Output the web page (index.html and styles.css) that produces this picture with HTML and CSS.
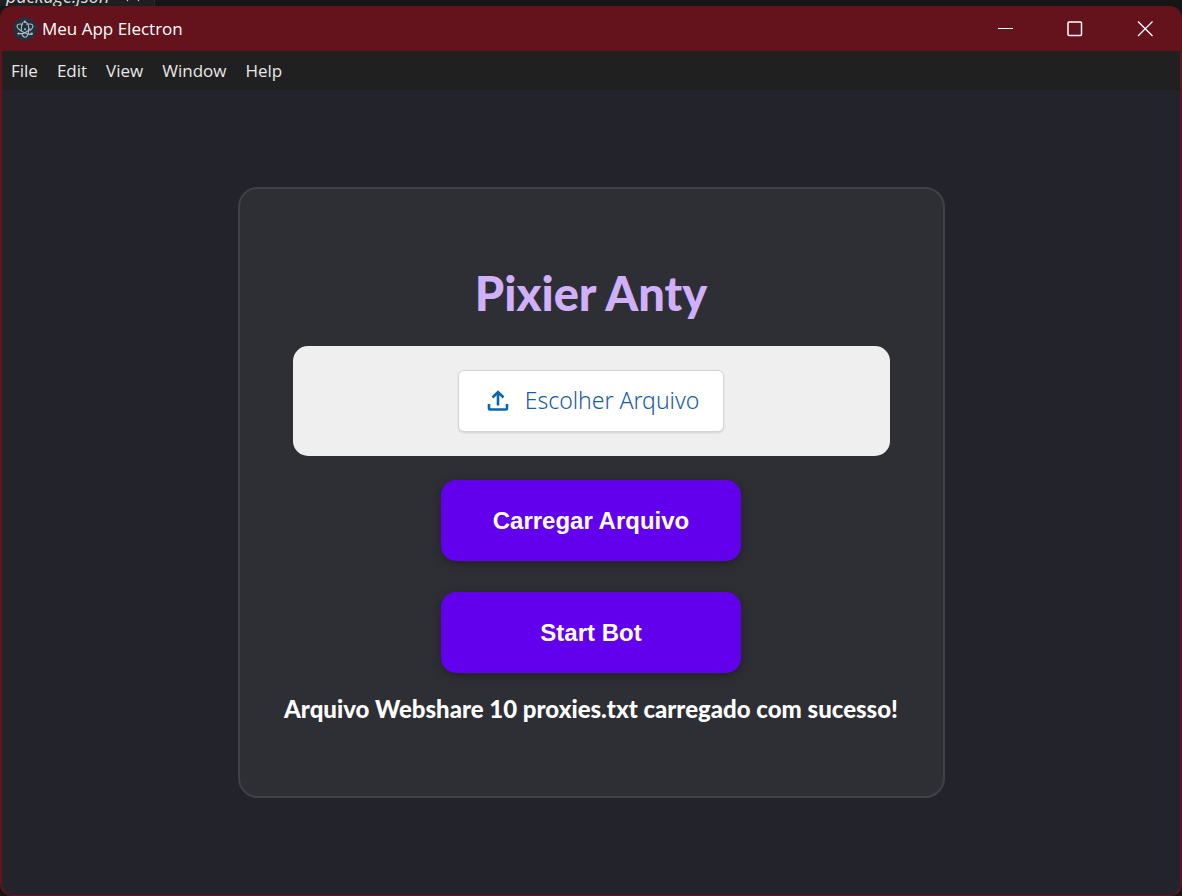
FILE: index.html
```
<!DOCTYPE html>
<html lang="pt-BR">
<head>
<meta charset="utf-8">
<title>Meu App Electron</title>
<link rel="stylesheet" href="styles.css">
</head>
<body>
<div class="backdrop">
  <div class="backdrop-tab">
    <span>package.json</span>
    <svg class="backdrop-mark" viewBox="0 0 18 6" aria-hidden="true"><path d="M1 -3L3.5 1L6 -3M12 -3L14.500 1L17 -3"/></svg>
  </div>
</div>
<div class="window">
  <header class="titlebar">
    <svg class="app-icon" viewBox="0 0 24 24" aria-hidden="true">
      <circle cx="12" cy="12" r="12" fill="#2b2e3a"/>
      <g fill="none" stroke="#9fc4cc" stroke-width="1.1" stroke-linecap="round">
        <path d="M9.500 7.200C6.500 6.700 4.600 7.200 4.100 8.300C3.400 10 6 12.800 10 15C13.300 16.900 16.600 17.700 18.500 17.200"/>
        <path d="M13.800 7.300C18 6.500 20 7.300 20 9.300C20 10.600 18.900 12 17.300 13.300"/>
        <path d="M12.800 5.200C14.600 6 15.800 9 15.800 12.500C15.800 16.800 14.100 20.200 12 20.200C10.700 20.200 9.600 19 8.900 17"/>
        <path d="M8.300 13.500C8.200 10 8.800 7 10 5.500M6.700 16.500C9.500 17 14 15 17 12"/>
      </g>
      <g fill="#9fc4cc"><circle cx="12" cy="12.300" r="1"/><circle cx="11.800" cy="4.800" r="1.200"/><circle cx="5.600" cy="16.600" r="1.200"/><circle cx="18.700" cy="16.800" r="1.200"/></g>
    </svg>
    <span class="app-title">Meu App Electron</span>
    <div class="controls">
      <button class="control" type="button" aria-label="Minimizar"><svg viewBox="0 0 16 16"><path d="M1 7.500h15"/></svg></button>
      <button class="control" type="button" aria-label="Maximizar"><svg viewBox="0 0 16 16"><rect x="1" y="1" width="13.500" height="13.500" rx="1" class="thick"/></svg></button>
      <button class="control" type="button" aria-label="Fechar"><svg viewBox="0 0 16 16"><path d="M1 0.500l14.500 14.500M15.500 0.500L1 15" class="cross"/></svg></button>
    </div>
  </header>
  <nav class="menubar">
    <button class="menu-item" type="button">File</button>
    <button class="menu-item" type="button">Edit</button>
    <button class="menu-item" type="button">View</button>
    <button class="menu-item" type="button">Window</button>
    <button class="menu-item" type="button">Help</button>
  </nav>
  <main class="content">
    <section class="card">
      <h1 class="heading">Pixier Anty</h1>
      <div class="dropzone">
        <button class="choose" type="button">
          <svg class="upload-icon" viewBox="0 0 22 22" aria-hidden="true"><path d="M2 14v4.5q0 1 1 1h16q1 0 1-1V14M11 15.5V3M5.500 7.500L11 2l5.500 5.500"/></svg>
          <span>Escolher Arquivo</span>
        </button>
      </div>
      <button class="action" type="button">Carregar Arquivo</button>
      <button class="action" type="button">Start Bot</button>
      <p class="status">Arquivo Webshare 10 proxies.txt carregado com sucesso!</p>
    </section>
  </main>
</div>
</body>
</html>
```
FILE: styles.css
```
* { box-sizing: border-box; }
body {
  margin: 0;
  min-height: 100vh;
  display: flex;
  flex-direction: column;
  background: #161616;
  font-family: "Open Sans", "Noto Sans", sans-serif;
}
button { font: inherit; cursor: pointer; }
.backdrop {
  display: flex;
  align-items: flex-end;
  height: 6px;
  overflow: hidden;
  color: #dddddd;
  font-size: 18px;
  font-style: italic;
  line-height: 18px;
}
.backdrop-tab {
  display: flex;
  align-items: flex-end;
  gap: 15px;
  padding: 0 12px 1px 6px;
  border-right: 1px solid #2a2a2a;
  background: #1f1f1f;
}
.backdrop-mark { width: 18px; height: 6px; fill: none; stroke: #dddddd; stroke-width: 1.5; }
.window {
  flex: 1;
  display: flex;
  flex-direction: column;
  overflow: hidden;
  border: 2px solid #64121b;
  border-top: 0;
  border-bottom-width: 1px;
  border-radius: 12px;
  background: #23232b;
}
.titlebar {
  display: flex;
  align-items: center;
  height: 45px;
  padding-left: 11px;
  background: #64121b;
  color: #ffffff;
}
.app-icon { width: 24px; height: 24px; }
.app-title { margin-left: 5px; font-size: 17px; }
.controls { display: flex; align-self: stretch; margin-left: auto; }
.control {
  display: flex;
  align-items: center;
  justify-content: center;
  width: 70px;
  padding: 0;
  border: 0;
  background: none;
}
.control svg { width: 16px; height: 16px; fill: none; stroke: #ffffff; stroke-width: 1; }
.control .thick { stroke-width: 1.5; }
.control .cross { stroke-width: 1.3; }
.menubar {
  display: flex;
  gap: 19px;
  height: 39px;
  padding-left: 9px;
  background: #202020;
}
.menu-item { padding: 0; border: 0; background: none; color: #e8e8e8; font-size: 17px; }
.content {
  flex: 1;
  display: flex;
  align-items: center;
  justify-content: center;
  padding: 24px;
}
.card {
  display: flex;
  flex-direction: column;
  align-items: center;
  width: 100%;
  max-width: 707px;
  padding: 72px 36px 70px;
  border: 2px solid #404146;
  border-radius: 20px;
  background: #2e2f34;
}
.heading {
  margin: 0;
  color: #d0b0fa;
  font: 900 47px/64px Lato, sans-serif;
}
.dropzone {
  display: flex;
  justify-content: center;
  align-self: stretch;
  margin: 21px 17px 24px;
  padding: 24px;
  border-radius: 15px;
  background: #efefef;
}
.choose {
  display: flex;
  align-items: center;
  gap: 16px;
  height: 62px;
  padding: 0 24px 0 28px;
  border: 1px solid #d4d4d4;
  border-radius: 6px;
  background: #ffffff;
  box-shadow: 0 1px 2px rgba(0, 0, 0, 0.12);
  color: #175ca8;
  font: 300 23px/32px "Noto Sans", sans-serif;
}
.choose span { padding-bottom: 2px; }
.upload-icon { width: 22px; height: 22px; fill: none; stroke: #0865b0; stroke-width: 2.6; }
.action {
  width: 300px;
  max-width: 100%;
  height: 81px;
  border: 0;
  border-radius: 15px;
  background: #6200ee;
  box-shadow: 0 3px 10px rgba(0, 0, 0, 0.3);
  color: #ffffff;
  font: 700 24px/30px "Liberation Sans", Arial, sans-serif;
}
.action + .action { margin-top: 31px; }
.status {
  margin: 19px 0 0;
  color: #ffffff;
  font: 900 24px/34px Lato, sans-serif;
  text-align: center;
}
```
